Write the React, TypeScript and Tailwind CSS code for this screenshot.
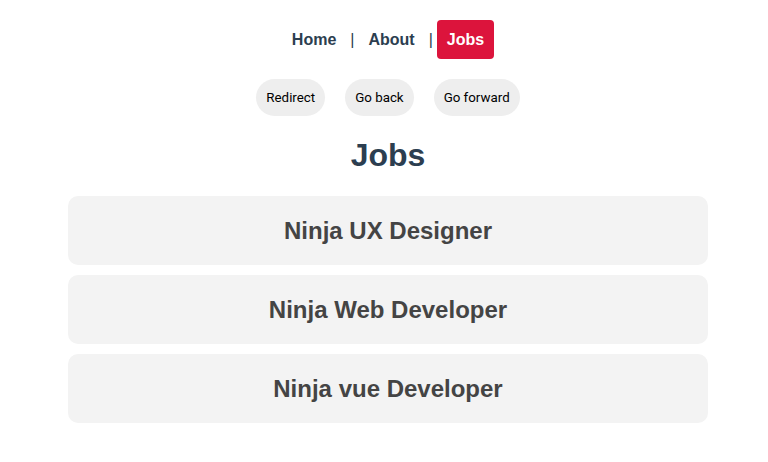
import React from "react";

const jobs = [
  { id: 1, title: "Ninja UX Designer" },
  { id: 2, title: "Ninja Web Developer" },
  { id: 3, title: "Ninja vue Developer" },
];

const App: React.FC = () => {
  return (
    <div className="min-h-[462px] bg-white pl-2 text-center text-[#2c3e50] font-['Liberation_Sans',Arial,sans-serif]">
      <nav className="flex justify-center items-center pt-5 text-base font-bold">
        <a className="px-[10px] py-[10px] leading-[19px] rounded">Home</a>
        <span className="mx-1 font-normal">|</span>
        <a className="px-[10px] py-[10px] leading-[19px] rounded">About</a>
        <span className="mx-1 font-normal">|</span>
        <a className="px-[10px] py-[10px] leading-[19px] rounded bg-[#dc143c] text-white">Jobs</a>
      </nav>

      <div className="flex justify-center gap-5 mt-5 font-['Roboto',sans-serif] text-[13.33px] text-black">
        <button className="h-[37px] px-[10px] rounded-full bg-[#eeeeee]">Redirect</button>
        <button className="h-[37px] px-[10px] rounded-full bg-[#eeeeee]">Go back</button>
        <button className="h-[37px] px-[10px] rounded-full bg-[#eeeeee]">Go forward</button>
      </div>

      <h1 className="text-[32px] font-bold leading-[37px] mt-[21px] mb-[22px]">Jobs</h1>

      <div className="flex flex-col gap-[10px] items-center">
        {jobs.map((job) => (
          <div
            key={job.id}
            className="w-[640px] h-[69px] flex items-center justify-center rounded-[10px] bg-[#f3f3f3]"
          >
            <h2 className="text-2xl font-bold text-[#444]">{job.title}</h2>
          </div>
        ))}
      </div>
    </div>
  );
};

export default App;
